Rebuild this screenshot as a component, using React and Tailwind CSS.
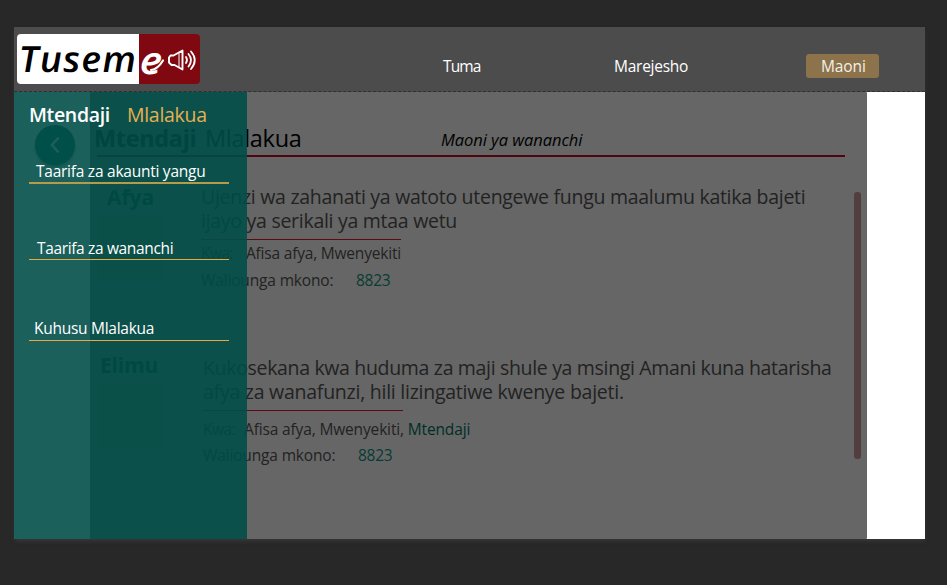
function Logo() {
  return (
    <div className="flex h-[50px] w-[183px] overflow-hidden rounded-sm">
      <div className="flex w-[122px] items-center bg-white pl-0.5">
        <span className="origin-left skew-x-3 scale-x-106 whitespace-nowrap font-['Open_Sans',sans-serif] text-[36px] leading-[50px] font-semibold tracking-[0.8px] text-black italic">
          Tusem
        </span>
      </div>
      <div className="relative flex flex-1 items-center bg-[#800811] pl-0.5">
        <span className="-skew-x-3 scale-x-110 font-['Open_Sans',sans-serif] text-[38px] leading-[46px] font-semibold text-white italic">
          e
        </span>
        <svg viewBox="0 0 61 50" className="absolute inset-0 h-full w-full" fill="none" stroke="#fff" strokeLinecap="round" strokeLinejoin="round">
          <path d="M12 36C17 35.500 21 31.500 24 26.500" strokeWidth="2.2" />
          <path d="M31.500 21.500h3L43.500 16.500v19L35.500 31h-3L30 28.500v-5z" strokeWidth="1.9" />
          <path d="M40 19v14" strokeWidth="1" />
          <path d="M47 23q2 3 0 6M49.500 20q5 6 0 12.500M52 17.500q7.500 8.500 0 17.500" strokeWidth="1.8" />
        </svg>
      </div>
    </div>
  );
}

function Header() {
  return (
    <header className="flex h-[65px] border-b border-dashed border-[#303030] bg-[#4c4c4c] pt-[7px] pl-[3px] text-[15.5px] leading-5 text-white">
      <Logo />
      <nav className="flex pt-[21px]">
        <a className="ml-[243px] w-[171px] pt-px tracking-[-0.9px]">Tuma</a>
        <a className="w-[192px] pt-px tracking-[-0.25px]">Marejesho</a>
        <a className="-mt-px h-6 w-[73px] rounded-[3px] bg-[#8c734c] pl-[15px] leading-[25px] tracking-[-0.1px] text-[#f4efe8]">
          Maoni
        </a>
      </nav>
    </header>
  );
}

function PanelTitle() {
  return (
    <div className="ml-[7px] flex h-[35px] w-[748px] border-b-2 border-[#500410] leading-8 text-black">
      <h1 className="-ml-[3px] w-[111px] text-[23.5px] font-bold tracking-[-0.35px]">Mtendaji</h1>
      <span className="w-[236px] text-[23.5px] tracking-[-0.3px]">Mlalakua</span>
      <em className="pt-0.5 text-[16.5px] tracking-[-0.05px]">Maoni ya wananchi</em>
    </div>
  );
}

function Category({ name, className }) {
  return (
    <div className="w-[111px] shrink-0 pl-[7px]">
      <h2 className={"text-[21px] leading-6 font-bold text-[#00201c] " + className}>{name}</h2>
      <div className="mt-[6px] h-[66px] w-[66px] rounded-sm bg-[#625c52]" />
    </div>
  );
}

function Drawer() {
  return (
    <aside className="absolute top-0 left-0 h-full w-[233px] bg-[#004d48]/[0.895] pt-[11px] pl-[15px] text-white">
      <div className="flex text-[19.5px] leading-6">
        <span className="w-[98px] font-semibold tracking-[-0.35px]">Mtendaji</span>
        <span className="tracking-[-0.3px] text-[#e6b050]">Mlalakua</span>
      </div>
      <ul className="w-[200px] text-[15.5px] leading-5">
        <li className="mt-[34px] h-[23px] border-b-2 border-[#b69b4b] pl-[7px] tracking-[-0.25px]">Taarifa za akaunti yangu</li>
        <li className="mt-[54px] h-[22px] border-b border-[#e4ab45] pl-[8px] tracking-[-0.35px]">Taarifa za wananchi</li>
        <li className="mt-[58px] h-[23px] border-b border-[#e4ab45] pl-[5px] tracking-[-0.27px]">Kuhusu Mlalakua</li>
      </ul>
    </aside>
  );
}

export default function App() {
  return (
    <div className="h-[585px] w-[947px] overflow-hidden bg-[#282828] pt-[27px] pl-[14px] font-['Open_Sans','Noto_Sans',sans-serif]">
      <div className="h-[512px] w-[911px] bg-white shadow-[0_3px_4px_-1px_#383838]">
        <Header />
        <div className="relative flex h-[447px]">
          <div className="w-[76px] pt-[33px] pl-[21px]">
            <div className="flex size-10 items-center justify-center rounded-full bg-[#005c54] shadow-[0_2px_3px_rgba(0,0,0,0.5)]">
              <svg viewBox="0 0 10 18" className="h-[18px] w-2.5" fill="none" stroke="#fff4d8" strokeWidth="2.6">
                <path d="M8.500 1.500L2 9l6.500 7.500" />
              </svg>
            </div>
          </div>
          <main className="w-[777px] rounded-[1px] bg-[#666] pt-[30px]">
            <PanelTitle />
            <div className="flex">
              <div className="w-[764px] whitespace-nowrap text-[#222]">
                <article className="flex pt-[28px]">
                  <Category name="Afya" className="pl-[10px]" />
                  <div className="text-[15.5px] leading-5">
                    <p className="text-[19.5px] leading-6 tracking-[-0.28px]">
                      Ujenzi wa zahanati ya watoto utengewe fungu maalumu katika bajeti
                      <br />
                      ijayo ya serikali ya mtaa wetu
                    </p>
                    <div className="mt-[6px] h-px w-[200px] bg-[#5c0a18]" />
                    <p className="mt-[3px] flex">
                      <span className="w-[45px] tracking-[-0.5px]">Kwa:</span>
                      <span className="tracking-[-0.2px]">Afisa afya, Mwenyekiti</span>
                    </p>
                    <p className="mt-[7px] flex">
                      <span className="w-[155px] tracking-[-0.15px]">Waliounga mkono:</span>
                      <span className="tracking-[-0.3px] text-[#063c34]">8823</span>
                    </p>
                  </div>
                </article>
                <article className="flex pt-[66px]">
                  <Category name="Elimu" className="-mt-[3px] pl-[3px] tracking-[-0.2px]" />
                  <div className="pl-[2px] text-[15.5px] leading-5">
                    <p className="text-[19.5px] leading-6 tracking-[-0.33px]">
                      Kukosekana kwa huduma za maji shule ya msingi Amani kuna hatarisha
                      <br />
                      <span className="tracking-[-0.25px]">afya za wanafunzi, hili lizingatiwe kwenye bajeti.</span>
                    </p>
                    <div className="mt-[6px] h-px w-[200px] bg-[#5c0a18]" />
                    <p className="mt-2 flex">
                      <span className="w-[41px] tracking-[-0.5px]">Kwa:</span>
                      <span className="tracking-[-0.15px]">
                        Afisa afya, Mwenyekiti, <span className="text-[#002e27]">Mtendaji</span>
                      </span>
                    </p>
                    <p className="mt-[6px] flex">
                      <span className="w-[155px] tracking-[-0.15px]">Waliounga mkono:</span>
                      <span className="tracking-[-0.3px] text-[#063c34]">8823</span>
                    </p>
                  </div>
                </article>
              </div>
              <div className="mt-[35px] h-[267px] w-[7px] rounded-[3px] bg-[#523e3e]" />
            </div>
          </main>
          <Drawer />
        </div>
      </div>
    </div>
  );
}
